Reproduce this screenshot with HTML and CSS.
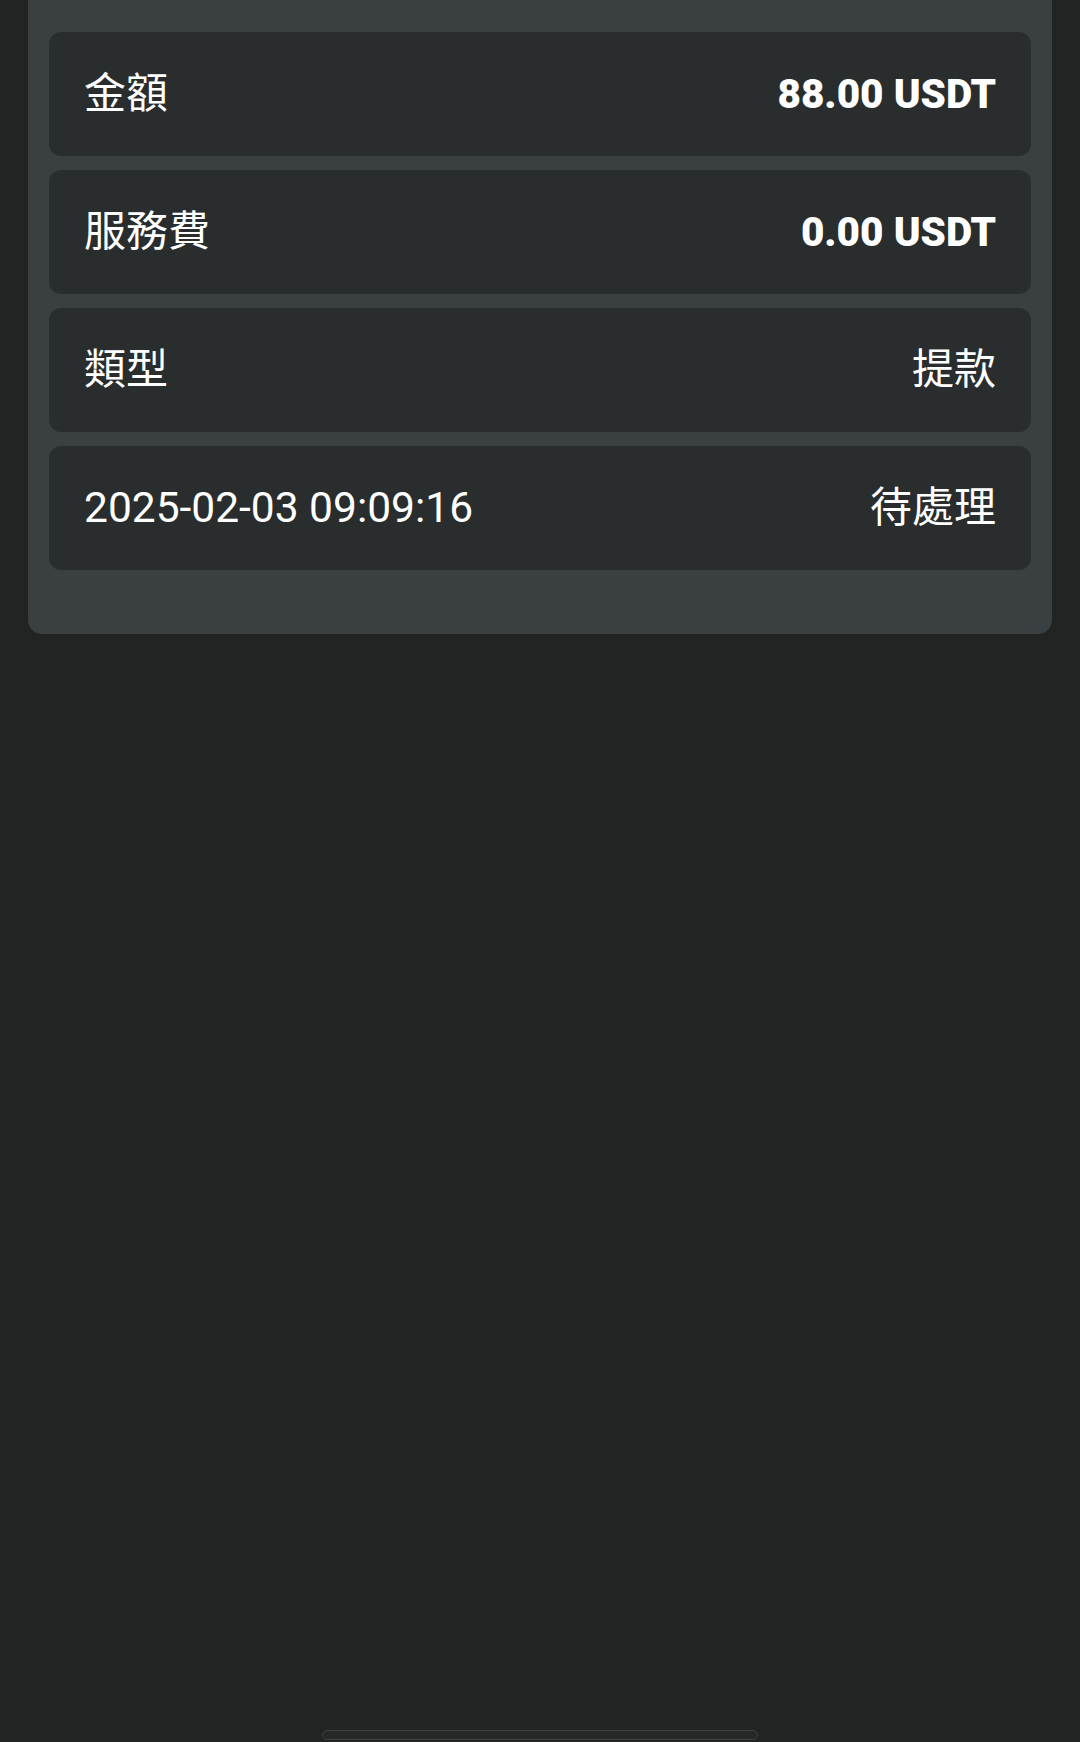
FILE: index.html
```html
<!DOCTYPE html>
<html lang="zh-Hant">
<head>
    <meta charset="UTF-8">
    <meta name="viewport" content="width=device-width, initial-scale=1">
    <title>提款詳情</title>
    <link rel="stylesheet" href="styles.css">
</head>
<body>
    <main class="detail">
        <div class="row">
            <span class="label">金額</span>
            <span class="value value-strong">88.00 USDT</span>
        </div>
        <div class="row">
            <span class="label">服務費</span>
            <span class="value value-strong">0.00 USDT</span>
        </div>
        <div class="row">
            <span class="label">類型</span>
            <span class="value">提款</span>
        </div>
        <div class="row">
            <span class="label label-date">2025-02-03 09:09:16</span>
            <span class="value">待處理</span>
        </div>
    </main>

    <div class="home-bar"></div>
</body>
</html>
```

FILE: styles.css
```css
html, body {
    margin: 0;
    padding: 0;
}

body {
    height: 1742px;
    background-color: #222423;
    font-family: Roboto, "Noto Sans CJK TC", sans-serif;
    color: #ffffff;
    display: flex;
    flex-direction: column;
}

.detail {
    margin: 0 28px;
    padding: 32px 21px 64px;
    background-color: #3a4042;
    border-radius: 0 0 14px 14px;
    display: flex;
    flex-direction: column;
    gap: 14px;
}

.row {
    height: 124px;
    box-sizing: border-box;
    padding: 0 35px;
    background-color: #292d2e;
    border-radius: 12px;
    display: flex;
    align-items: center;
    justify-content: space-between;
    font-size: 42px;
    line-height: 1;
}

.label {
    font-weight: 400;
}

.label-date {
    font-size: 42.5px;
}

.value {
    font-weight: 400;
}

.value-strong {
    font-size: 40.5px;
    font-weight: 900;
}

.home-bar {
    margin: auto auto 2px;
    width: 434px;
    height: 8px;
    border: 1px solid #3f4242;
    border-radius: 6px;
    background-color: #262828;
}
```
